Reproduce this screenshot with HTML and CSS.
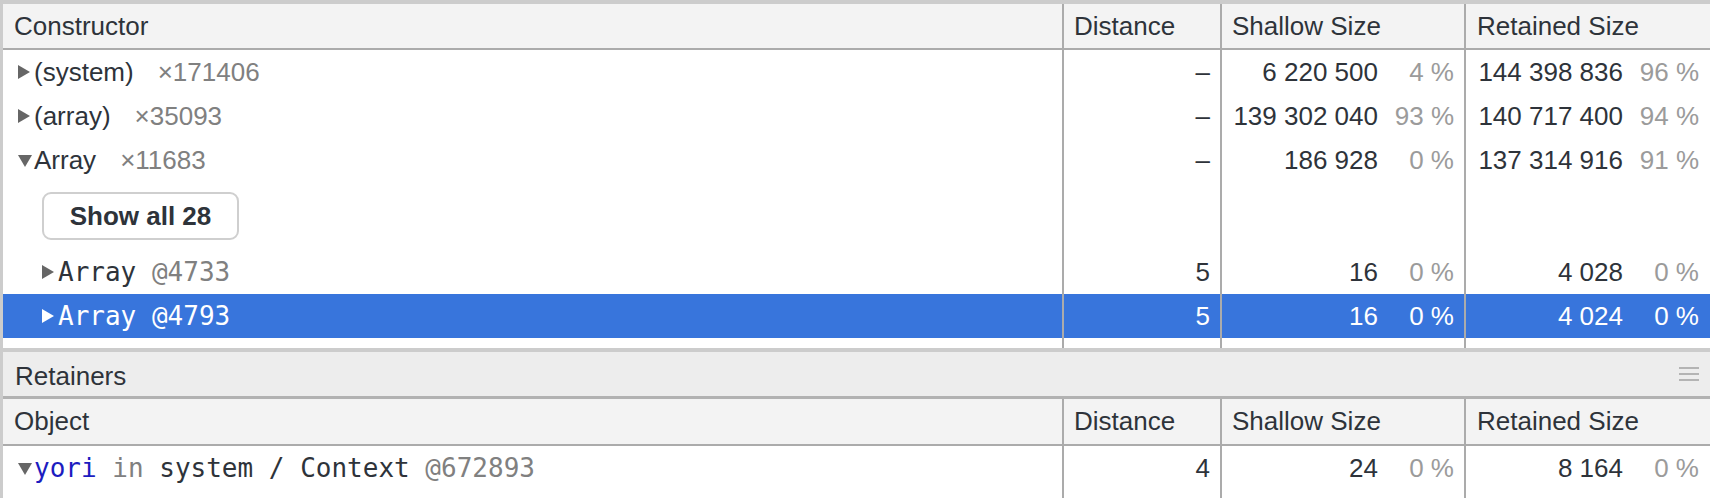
FILE: index.html
```html
<!DOCTYPE html>
<html>
<head>
<meta charset="utf-8">
<link rel="stylesheet" href="styles.css">
</head>
<body>
<div class="app">
  <section class="grid top">
    <div class="row head">
      <div class="cell c1">Constructor</div>
      <div class="cell c2">Distance</div>
      <div class="cell c3">Shallow Size</div>
      <div class="cell c4">Retained Size</div>
    </div>
    <div class="row">
      <div class="cell c1 lvl0"><span class="tri right"></span><span class="name">(system)</span><span class="count">×171406</span></div>
      <div class="cell c2 num">–</div>
      <div class="cell c3 num"><span>6 220 500</span><span class="pct">4 %</span></div>
      <div class="cell c4 num"><span>144 398 836</span><span class="pct">96 %</span></div>
    </div>
    <div class="row">
      <div class="cell c1 lvl0"><span class="tri right"></span><span class="name">(array)</span><span class="count">×35093</span></div>
      <div class="cell c2 num">–</div>
      <div class="cell c3 num"><span>139 302 040</span><span class="pct">93 %</span></div>
      <div class="cell c4 num"><span>140 717 400</span><span class="pct">94 %</span></div>
    </div>
    <div class="row">
      <div class="cell c1 lvl0"><span class="tri down"></span><span class="name">Array</span><span class="count">×11683</span></div>
      <div class="cell c2 num">–</div>
      <div class="cell c3 num"><span>186 928</span><span class="pct">0 %</span></div>
      <div class="cell c4 num"><span>137 314 916</span><span class="pct">91 %</span></div>
    </div>
    <div class="row btn-row">
      <div class="cell c1"><button class="show-all">Show all 28</button></div>
      <div class="cell c2"></div>
      <div class="cell c3"></div>
      <div class="cell c4"></div>
    </div>
    <div class="row">
      <div class="cell c1 lvl1"><span class="tri right"></span><span class="mono">Array <span class="gray">@4733</span></span></div>
      <div class="cell c2 num">5</div>
      <div class="cell c3 num"><span>16</span><span class="pct">0 %</span></div>
      <div class="cell c4 num"><span>4 028</span><span class="pct">0 %</span></div>
    </div>
    <div class="row selected">
      <div class="cell c1 lvl1"><span class="tri right"></span><span class="mono">Array <span class="gray">@4793</span></span></div>
      <div class="cell c2 num">5</div>
      <div class="cell c3 num"><span>16</span><span class="pct">0 %</span></div>
      <div class="cell c4 num"><span>4 024</span><span class="pct">0 %</span></div>
    </div>
    <div class="row filler">
      <div class="cell c1"></div>
      <div class="cell c2"></div>
      <div class="cell c3"></div>
      <div class="cell c4"></div>
    </div>
  </section>
  <div class="split">
    <span class="split-title">Retainers</span>
    <svg class="grip" width="20" height="16" viewBox="0 0 20 16"><rect x="0" y="1" width="20" height="2" fill="#b4b4b4"/><rect x="0" y="7" width="20" height="2" fill="#b4b4b4"/><rect x="0" y="13" width="20" height="2" fill="#b4b4b4"/></svg>
  </div>
  <section class="grid bottom">
    <div class="row head head2">
      <div class="cell c1">Object</div>
      <div class="cell c2">Distance</div>
      <div class="cell c3">Shallow Size</div>
      <div class="cell c4">Retained Size</div>
    </div>
    <div class="row">
      <div class="cell c1 lvl0"><span class="tri down"></span><span class="mono"><span class="prop">yori</span> <span class="gray">in</span> system / Context <span class="gray">@672893</span></span></div>
      <div class="cell c2 num">4</div>
      <div class="cell c3 num"><span>24</span><span class="pct">0 %</span></div>
      <div class="cell c4 num"><span>8 164</span><span class="pct">0 %</span></div>
    </div>
    <div class="row filler grow">
      <div class="cell c1"></div>
      <div class="cell c2"></div>
      <div class="cell c3"></div>
      <div class="cell c4"></div>
    </div>
  </section>
</div>
</body>
</html>
```
FILE: styles.css
```css
* { box-sizing: border-box; }
html, body { margin: 0; padding: 0; }
body {
  width: 1710px;
  height: 498px;
  overflow: hidden;
  background: #fff;
  font-family: "Liberation Sans", Arial, sans-serif;
  font-size: 26px;
  color: #2e333a;
}
.app {
  height: 498px;
  display: flex;
  flex-direction: column;
  border-top: 4px solid #cccccc;
  border-left: 3px solid #cccccc;
}
.grid { display: flex; flex-direction: column; }
.bottom { flex: 1; }
.row {
  display: flex;
  height: 44px;
  flex: none;
}
.cell {
  display: flex;
  align-items: center;
  white-space: nowrap;
  overflow: hidden;
}
.c1 { width: 1059px; flex: none; padding-left: 11px; }
.c2 { width: 158px; flex: none; border-left: 2px solid #ababab; padding-left: 10px; padding-right: 10px; }
.c3 { width: 244px; flex: none; border-left: 2px solid #ababab; padding-left: 10px; padding-right: 10px; }
.c4 { flex: 1; border-left: 2px solid #ababab; padding-left: 11px; padding-right: 11px; }
.head {
  background: #f3f3f3;
  border-bottom: 2px solid #ababab;
  height: 46px;
}
.head2 { height: 47px; }
.num { justify-content: flex-end; }
.pct { width: 76px; text-align: right; color: #9b9b9b; flex: none; }
.lvl0 { padding-left: 15px; }
.lvl1 { padding-left: 39px; }
.tri { display: inline-block; width: 0; height: 0; flex: none; }
.tri.right {
  border-left: 12px solid #666;
  border-top: 7px solid transparent;
  border-bottom: 7px solid transparent;
  margin-right: 4px;
}
.tri.down {
  border-top: 12px solid #666;
  border-left: 7px solid transparent;
  border-right: 7px solid transparent;
  margin-right: 2px;
  margin-top: 2px;
}
.count { color: #808080; margin-left: 24px; }
.mono { font-family: "DejaVu Sans Mono", "Liberation Mono", monospace; font-size: 26px; }
.gray { color: #808080; }
.prop { color: #1c1cc0; }
.btn-row { height: 68px; }
.show-all {
  margin-left: 28px;
  width: 197px;
  height: 48px;
  border: 2px solid #cfcfcf;
  border-radius: 9px;
  background: #fff;
  font-family: "Liberation Sans", Arial, sans-serif;
  font-size: 26px;
  font-weight: bold;
  color: #2e333a;
  padding: 0;
}
.selected { background: #3875dc; color: #fff; }
.selected .pct, .selected .gray { color: #fff; }
.selected .tri.right { border-left-color: #fff; }
.filler { height: 10px; }
.grow { flex: 1; height: auto; }
.split {
  flex: none;
  height: 51px;
  display: flex;
  align-items: center;
  justify-content: space-between;
  background: #ededed;
  border-top: 4px solid #cccccc;
  border-bottom: 3px solid #b2b2b2;
  padding-left: 12px;
  padding-right: 11px;
}
.split-title { padding-top: 4px; }
.grip { display: block; }
```
